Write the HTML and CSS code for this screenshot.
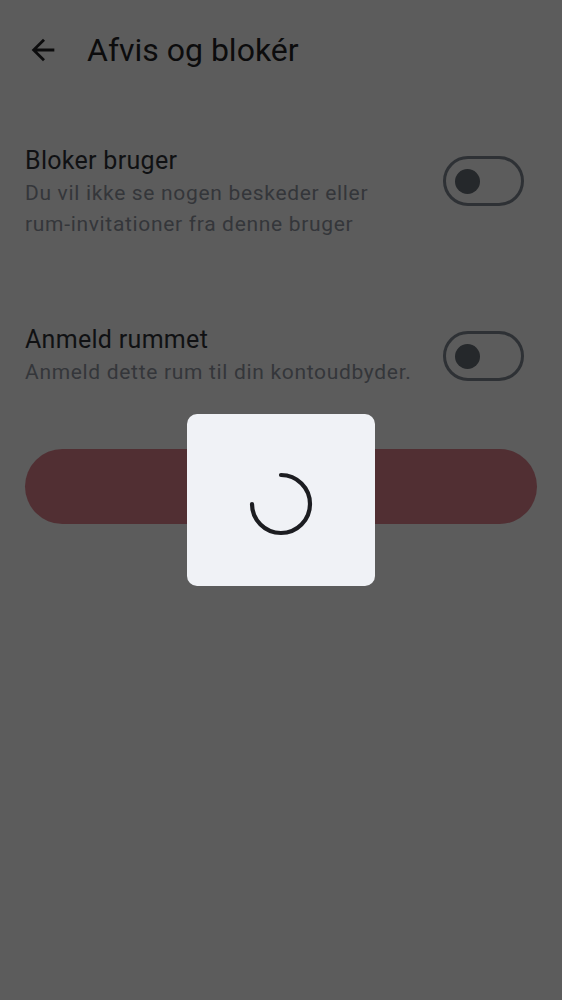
FILE: index.html
```html
<!DOCTYPE html>
<html lang="da">
<head>
<meta charset="utf-8">
<title>Afvis og blokér</title>
<link rel="stylesheet" href="styles.css">
</head>
<body>
<div class="screen">
  <header class="topbar">
    <svg class="back" viewBox="0 0 24 24" aria-hidden="true"><path d="M20 11H7.83l5.59-5.59L12 4l-8 8 8 8 1.41-1.41L7.83 13H20v-2z"/></svg>
    <h1 class="title">Afvis og blokér</h1>
  </header>
  <main class="content">
    <div class="setting setting-first">
      <div class="setting-text">
        <div class="setting-label">Bloker bruger</div>
        <div class="setting-desc">Du vil ikke se nogen beskeder eller <span class="nowrap">rum-invitationer</span> fra denne bruger</div>
      </div>
      <div class="switch switch-first"><span class="thumb"></span></div>
    </div>
    <div class="setting setting-second">
      <div class="setting-text">
        <div class="setting-label">Anmeld rummet</div>
        <div class="setting-desc">Anmeld dette rum til din kontoudbyder.</div>
      </div>
      <div class="switch switch-second"><span class="thumb"></span></div>
    </div>
    <div class="decline-btn">Afvis</div>
  </main>
</div>
<div class="scrim">
  <div class="loading-dialog">
    <svg class="spinner" viewBox="0 0 66 66" aria-hidden="true">
      <path d="M33 4 A29 29 0 1 1 4 33" fill="none" stroke="#1c1d21" stroke-width="4.2" stroke-linecap="round"/>
    </svg>
  </div>
</div>
</body>
</html>
```
FILE: styles.css
```css
html, body {
  margin: 0;
  padding: 0;
}
body {
  background: #5c5c5c;
  font-family: Roboto, "Noto Sans", "DejaVu Sans", sans-serif;
  width: 562px;
  height: 1000px;
  overflow: hidden;
}
.screen {
  height: 1000px;
}
.topbar {
  display: flex;
  align-items: center;
  height: 100px;
  padding-left: 26px;
  box-sizing: border-box;
}
.back {
  width: 34px;
  height: 34px;
  fill: #0c0c0d;
  flex: none;
}
.title {
  margin: 0 0 0 27px;
  font-size: 32px;
  font-weight: 400;
  color: #0c0c0d;
  letter-spacing: 0;
}
.content {
  padding: 0 38px 0 25px;
}
.setting {
  display: flex;
  justify-content: space-between;
  align-items: flex-start;
}
.setting-first {
  margin-top: 44px;
}
.setting-second {
  margin-top: 83px;
}
.setting-text {
  flex: 1;
  min-width: 0;
  padding-right: 16px;
}
.setting-label {
  font-size: 25px;
  line-height: 34px;
  letter-spacing: 0.3px;
  color: #101113;
}
.setting-desc {
  font-size: 21px;
  line-height: 31px;
  letter-spacing: 0.68px;
  color: #34363a;
}
.nowrap {
  white-space: nowrap;
}
.switch {
  flex: none;
  width: 81px;
  height: 50px;
  box-sizing: border-box;
  border: 3px solid #2e3135;
  border-radius: 25px;
  display: flex;
  align-items: center;
  padding-left: 9px;
}
.switch-first {
  margin-top: 12px;
}
.switch-second {
  margin-top: 8px;
}
.thumb {
  width: 25px;
  height: 25px;
  border-radius: 50%;
  background: #25282b;
}
.decline-btn {
  margin: 61px -13px 0 0;
  height: 75px;
  border-radius: 38px;
  background: #512f33;
  color: #5a3a3e;
  display: flex;
  align-items: center;
  justify-content: center;
  font-size: 22px;
}
.scrim {
  position: fixed;
  inset: 0;
  display: flex;
  align-items: center;
  justify-content: center;
}
.loading-dialog {
  width: 188px;
  height: 172px;
  margin-left: -1px;
  border-radius: 10px;
  background: #f0f2f6;
  display: flex;
  align-items: center;
  justify-content: center;
}
.spinner {
  width: 66px;
  height: 66px;
  margin-top: 8px;
}
```
